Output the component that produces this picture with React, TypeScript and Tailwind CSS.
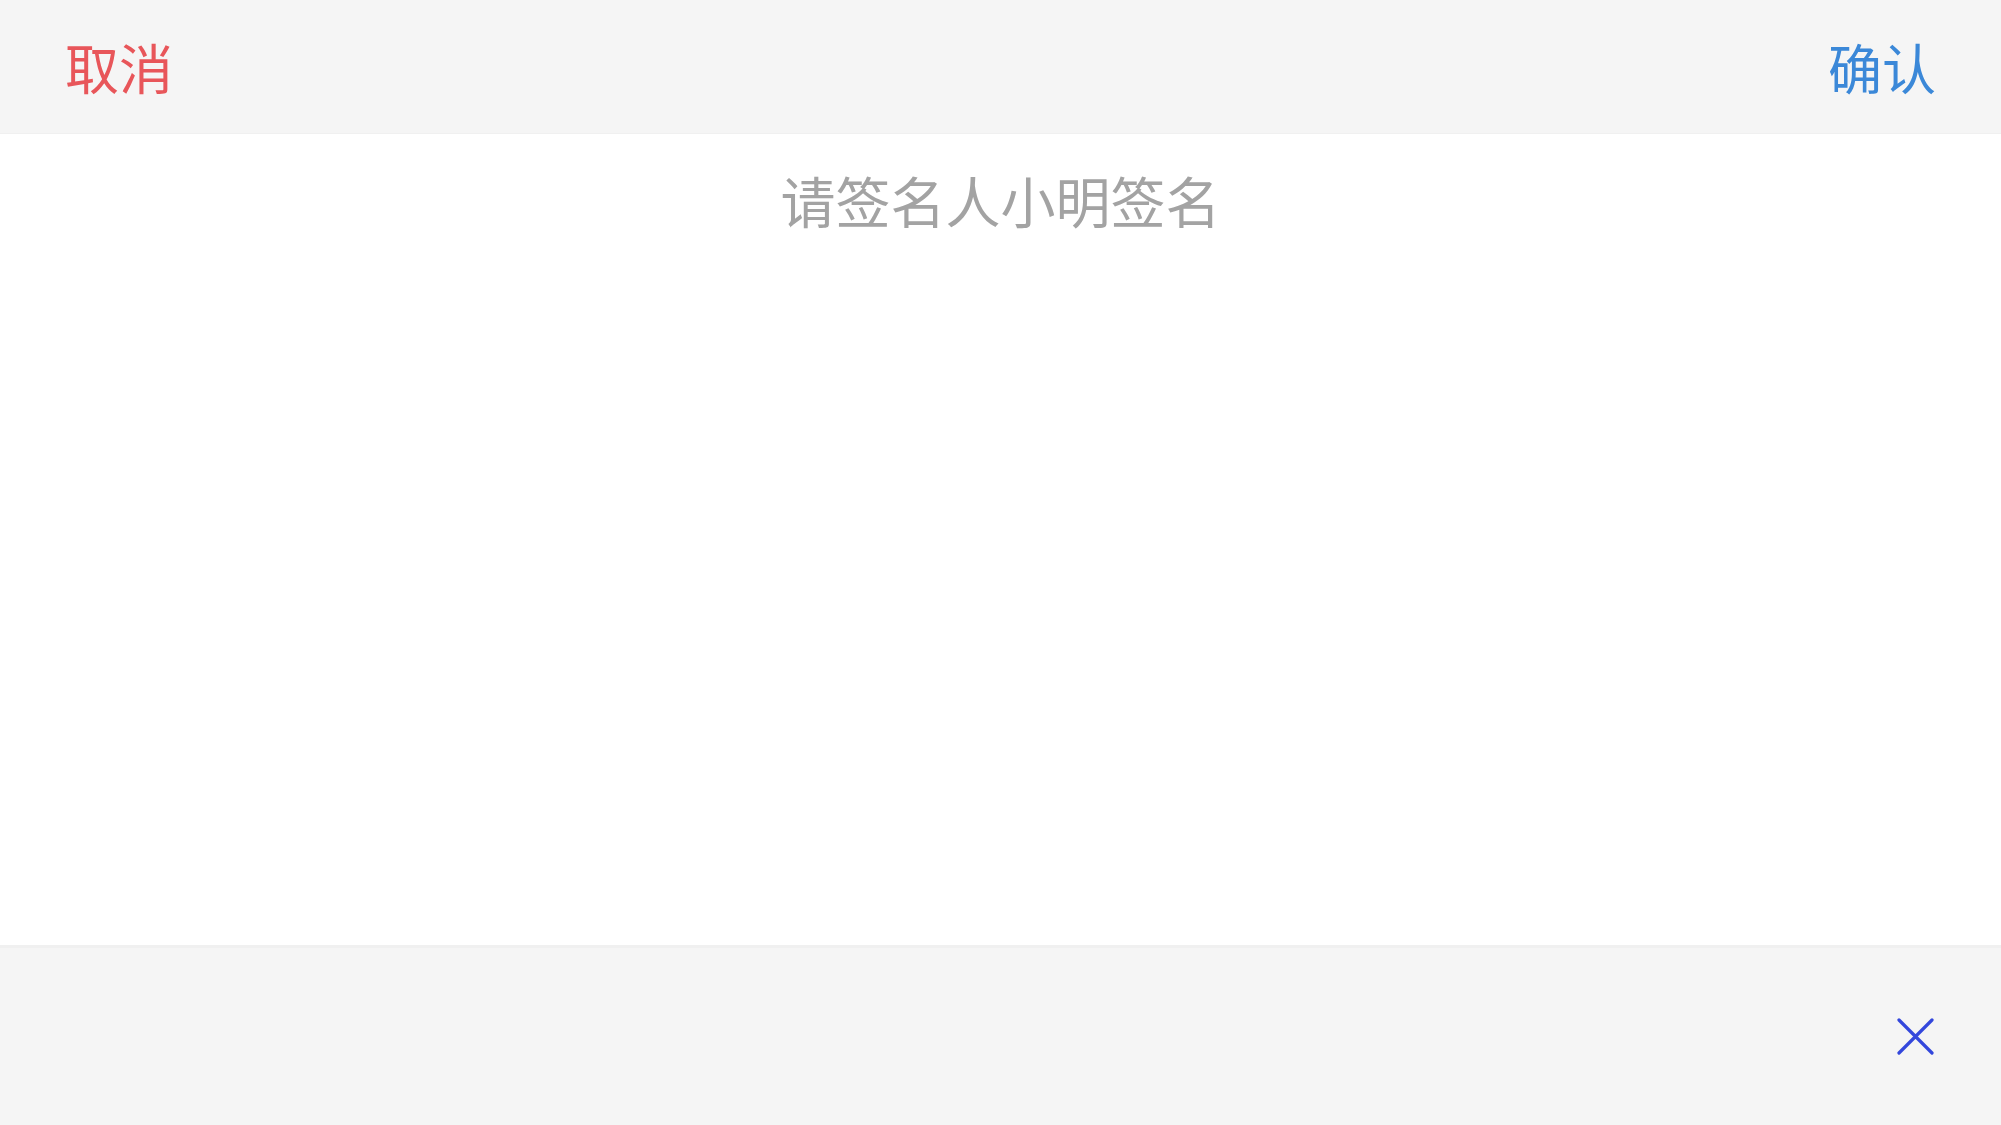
import React from "react";

const font = { fontFamily: '"Noto Sans CJK SC", "Noto Sans", sans-serif' };

function CloseIcon() {
  return (
    <svg width="37" height="37" viewBox="0 0 37 37" fill="none">
      <path d="M2 2 L35 35 M35 2 L2 35" stroke="#3347dc" strokeWidth="3.2" strokeLinecap="round" />
    </svg>
  );
}

export default function App() {
  return (
    <div
      className="flex h-[1125px] w-full flex-col bg-white"
      style={font}
    >
      <header className="flex h-[134px] shrink-0 items-center justify-between border-b border-[#f0f0f0] bg-[#f5f5f5] px-[65px]">
        <button className="text-[54px] leading-none text-[#e8565a]">取消</button>
        <button className="text-[54px] leading-none text-[#3b88d8]">确认</button>
      </header>
      <main className="flex flex-1 flex-col items-center bg-white pt-[38px]">
        <div className="text-[55px] leading-none text-[#a3a3a3]">请签名人小明签名</div>
      </main>
      <footer className="flex h-[180px] shrink-0 items-center justify-end border-t-[3px] border-[#f0f0f0] bg-[#f5f5f5] pr-[67px]">
        <CloseIcon />
      </footer>
    </div>
  );
}
